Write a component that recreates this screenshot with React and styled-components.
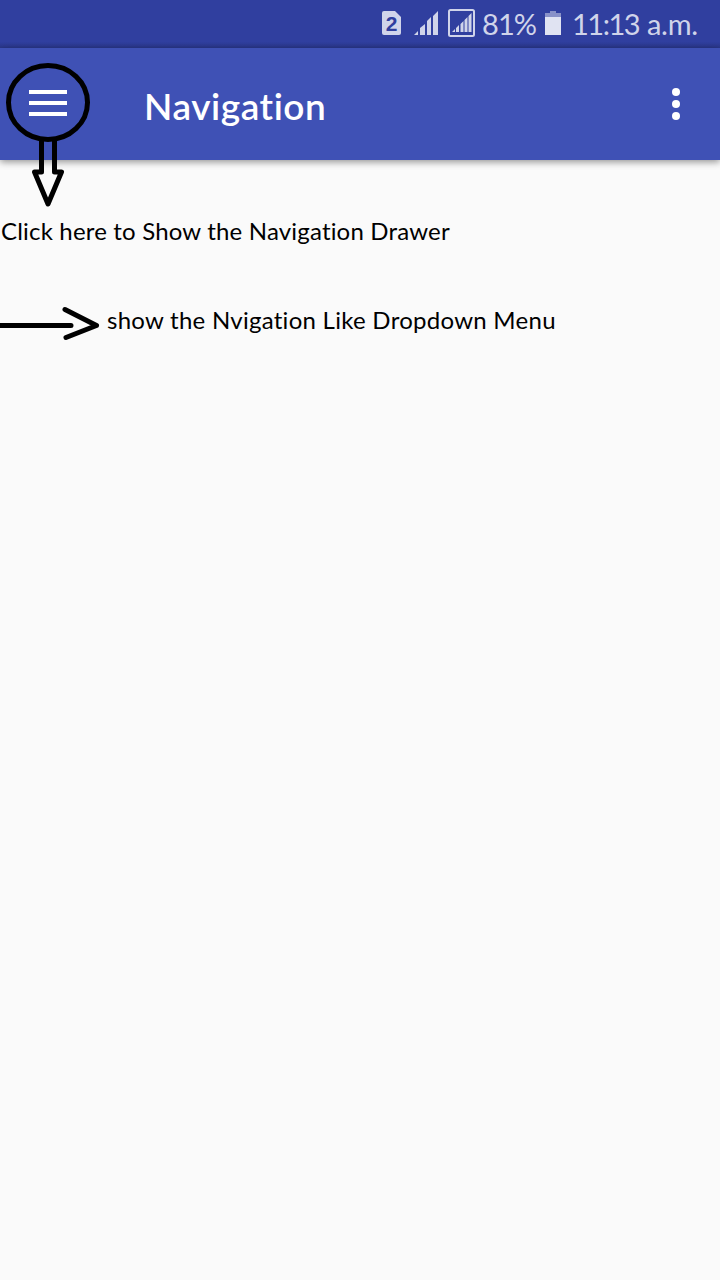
import React from "react";
import styled, { createGlobalStyle } from "styled-components";

const GlobalStyle = createGlobalStyle`
  body { margin: 0; background: #fafafa; }
`;

const Screen = styled.div`
  position: relative;
  width: 720px;
  height: 1280px;
  overflow: hidden;
  display: flex;
  flex-direction: column;
  background: #fafafa;
  font-family: Lato, "Open Sans", sans-serif;
  font-variant-ligatures: none;
`;

const StatusBar = styled.header`
  box-sizing: border-box;
  height: 48px;
  padding-left: 382px;
  display: flex;
  align-items: flex-start;
  background: linear-gradient(#303f9f 42px, #2a378b 48px);
  color: #d0d4ea;
`;

const StatusIcon = styled.svg`
  display: block;
  flex: none;
  margin-left: ${(p) => p.$gap || 0}px;
`;

const SimBadge = styled.span`
  flex: none;
  width: 19px;
  height: 24px;
  margin-top: 11px;
  border-radius: 2px;
  background: #d0d4ea;
  clip-path: polygon(0 0, 13px 0, 19px 6px, 19px 24px, 0 24px);
  color: #303f9f;
  font: bold 21px/25px "Liberation Sans", sans-serif;
  text-align: center;
`;

const StatusText = styled.span`
  flex: none;
  width: ${(p) => p.$width}px;
  margin-left: ${(p) => p.$gap}px;
  font-size: 29px;
  line-height: 47px;
  letter-spacing: ${(p) => p.$spacing}px;
  white-space: nowrap;
`;

const AppBar = styled.nav`
  box-sizing: border-box;
  height: 112px;
  flex: none;
  padding: 0 40px 0 29px;
  display: flex;
  align-items: center;
  background: #3f51b5;
  box-shadow: 0 2px 7px rgba(0, 0, 0, 0.42);
  z-index: 1;
`;

const MenuButton = styled.button`
  width: 38px;
  height: 26px;
  padding: 0;
  border: 0;
  background: none;
  display: flex;
  flex-direction: column;
  justify-content: space-between;
  margin-bottom: 2px;
`;

const MenuLine = styled.span`
  height: 4px;
  width: 38px;
  background: #fff;
`;

const Title = styled.h1`
  flex: 1;
  margin: 3px 0 0 77px;
  color: #fff;
  font-size: 37px;
  font-weight: 600;
  line-height: 48px;
  letter-spacing: 0.55px;
`;

const OverflowButton = styled.button`
  width: 8px;
  height: 32px;
  padding: 0;
  border: 0;
  background: none;
  display: flex;
  flex-direction: column;
  justify-content: space-between;
`;

const Dot = styled.span`
  width: 8px;
  height: 8px;
  border-radius: 50%;
  background: #fff;
`;

const Content = styled.main`
  flex: 1;
  padding-top: 53px;
  display: flex;
  flex-direction: column;
  gap: 53px;
`;

const NoteRow = styled.div`
  height: 36px;
  display: flex;
  align-items: center;
`;

const Note = styled.p`
  margin: 0 0 0 ${(p) => p.$gap}px;
  color: #000;
  font-size: 24px;
  line-height: 36px;
  letter-spacing: ${(p) => p.$spacing}px;
  white-space: nowrap;
`;

const RightArrow = styled.svg`
  display: block;
  flex: none;
  margin-top: 8px;
`;

const MenuCallout = styled.svg`
  position: absolute;
  z-index: 2;
  left: 0;
  top: 60px;
  pointer-events: none;
`;

export default function App() {
  return (
    <>
      <GlobalStyle />
      <Screen>
        <StatusBar>
          <SimBadge>2</SimBadge>
          <StatusIcon $gap={13} width="24" height="48" fill="#d0d4ea">
            <path d="M0 35l4-4v4zM6 35v-7l5-4v11zM13 35V21l4-4v18zM19 35V16l5-5v24z" />
          </StatusIcon>
          <StatusIcon $gap={10} width="28" height="48" fill="#d0d4ea">
            <rect x="1" y="10" width="25" height="26" rx="1.500" fill="none" stroke="#d0d4ea" strokeWidth="2" />
            <path d="M4 32l3-3v3zM8 32v-4l3-3v7zM12.500 32v-8l3-3v11zM16.500 32V20l3-3v15zM20.500 32V16l3-3v19z" />
          </StatusIcon>
          <StatusText $width={55} $gap={6} $spacing={-0.9}>81%</StatusText>
          <StatusIcon $gap={8} width="16" height="48">
            <path d="M0 17v-4h5v-2h6v2h5v4z" fill="#8891c8" />
            <path d="M0 17h16v18H0z" fill="#e0e3f2" />
          </StatusIcon>
          <StatusText $width={67} $gap={11} $spacing={-1.5}>11:13</StatusText>
          <StatusText $width={52} $gap={8} $spacing={-0.3}>a.m.</StatusText>
        </StatusBar>
        <AppBar>
          <MenuButton aria-label="Open navigation drawer">
            <MenuLine />
            <MenuLine />
            <MenuLine />
          </MenuButton>
          <Title>Navigation</Title>
          <OverflowButton aria-label="More options">
            <Dot />
            <Dot />
            <Dot />
          </OverflowButton>
        </AppBar>
        <Content>
          <NoteRow>
            <Note $gap={1} $spacing={0.18}>Click here to Show the Navigation Drawer</Note>
          </NoteRow>
          <NoteRow>
            <RightArrow width="100" height="36" fill="none" stroke="#000" strokeWidth="5" strokeLinecap="round" strokeLinejoin="round">
              <path d="M-3 19.500H71M65 3.500l31.500 16-30.500 12" />
            </RightArrow>
            <Note $gap={7} $spacing={0.27}>show the Nvigation Like Dropdown Menu</Note>
          </NoteRow>
        </Content>
        <MenuCallout width="100" height="150" stroke="#000" strokeWidth="5" strokeLinejoin="round">
          <path d="M41.500 80V112H34.500L48 144 61.500 112H54.500V80" fill="none" />
          <ellipse cx="48" cy="42.500" rx="39.500" ry="37" fill="none" />
        </MenuCallout>
      </Screen>
    </>
  );
}
